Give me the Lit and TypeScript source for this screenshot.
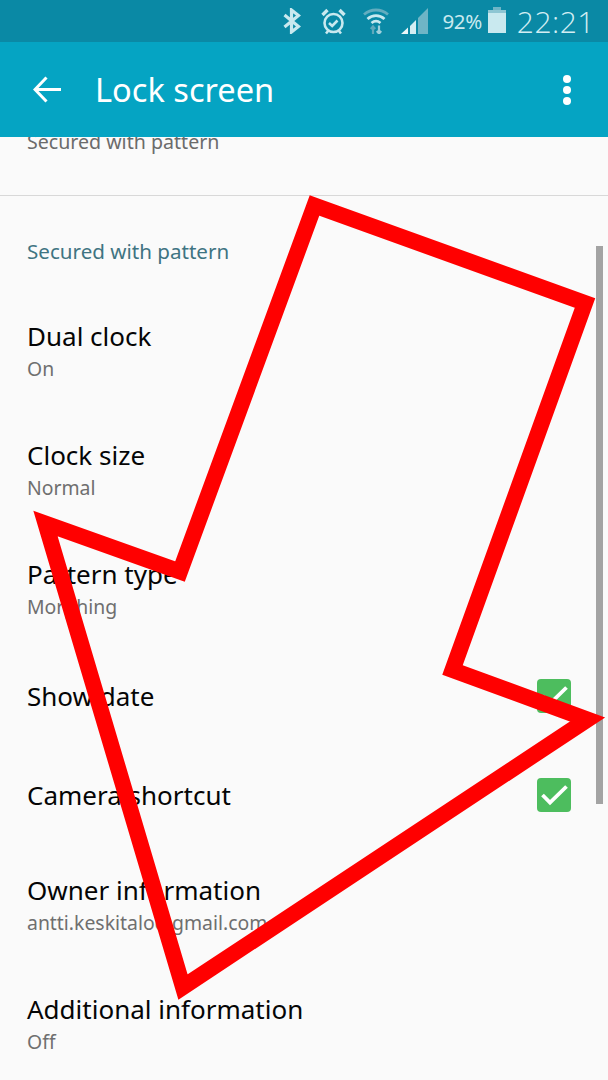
import { LitElement, html, css, svg } from "lit";
import { customElement } from "lit/decorators.js";

type Row = { title: string; sub?: string; check?: boolean; cls: string };

const rows: Row[] = [
  { title: "Dual clock", sub: "On", cls: "two" },
  { title: "Clock size", sub: "Normal", cls: "two" },
  { title: "Pattern type", sub: "Morphing", cls: "two" },
  { title: "Show date", check: true, cls: "one up" },
  { title: "Camera shortcut", check: true, cls: "one" },
  { title: "Owner information", sub: "antti.keskitalo@gmail.com", cls: "two down" },
  { title: "Additional information", sub: "Off", cls: "two" },
];

@customElement("app-root")
export class AppRoot extends LitElement {
  static styles = css`
    :host {
      display: block;
      position: relative;
      width: 608px;
      height: 1080px;
      overflow: hidden;
      background: #fafafa;
      font-family: "Noto Sans", "Open Sans", sans-serif;
    }
    .status {
      height: 42px;
      background: #0a89a5;
      display: flex;
      align-items: center;
      justify-content: flex-end;
      color: #c9e9ef;
    }
    .status svg { display: block; flex: none; }
    .bt { margin-right: 20px; margin-top: -1px; }
    .alarm { margin-right: 17px; margin-top: 1px; }
    .wifi { margin-right: 12px; margin-top: -1px; }
    .signal { margin-right: 15px; margin-top: -1px; }
    .pct { font-size: 20.5px; letter-spacing: -0.4px; margin-right: 6px; }
    .batt { margin-right: 11px; margin-top: -2px; }
    .time {
      font-size: 30px;
      letter-spacing: 0.5px;
      margin-right: 13px;
      font-weight: 300;
      font-family: "Open Sans", sans-serif;
      color: #d3eef3;
    }
    .bar {
      height: 95px;
      background: #05a4c3;
      display: flex;
      align-items: center;
      color: #fff;
      box-sizing: border-box;
      padding: 0 0 0 33px;
    }
    .bar h1 {
      margin: 0 0 0 33px;
      font-size: 32.6px;
      font-weight: 400;
      flex: 1;
    }
    .more { margin-right: 36px; }
    .clip {
      height: 59px;
      overflow: hidden;
      border-bottom: 1.5px solid #d8d8d8;
      box-sizing: border-box;
      padding-left: 27px;
    }
    .clip div {
      margin-top: -9px;
      font-size: 19.6px;
      line-height: 28px;
      color: #6b6b6b;
    }
    .section {
      margin: 41px 0 0 27px;
      font-size: 20.6px;
      line-height: 28px;
      color: #3f7482;
    }
    .rows { margin-top: 27px; }
    .row {
      display: flex;
      align-items: center;
      padding: 0 37px 0 27px;
      box-sizing: border-box;
    }
    .row.two { height: 119px; }
    .row.one { height: 99px; }
    .row.up { margin-top: -3px; }
    .row.down { margin-top: 2px; }
    .text { flex: 1; }
    .title { font-size: 26px; line-height: 32px; color: #050505; }
    .sub { font-size: 19.4px; line-height: 28px; color: #6f6f6f; margin-top: 3px; }
    .check {
      width: 34px;
      height: 34px;
      border-radius: 4px;
      background: #4dbd5e;
    }
    .check svg { display: block; }
    .scroll {
      position: absolute;
      left: 596px;
      top: 246px;
      width: 7px;
      height: 558px;
      background: #a3a3a3;
    }
    .arrow {
      position: absolute;
      left: 0;
      top: 0;
    }
  `;

  render() {
    return html`
      <div class="status">
        <svg class="bt" width="18" height="26" viewBox="0 0 18 26" fill="none" stroke="currentColor" stroke-width="3.2">
          <path d="M1.500 7 15.500 18.500 8.500 24V2L15.500 7.500 1.500 19" />
        </svg>
        <svg class="alarm" width="25" height="27" viewBox="0 0 25 27" fill="none" stroke="currentColor" stroke-width="2.6">
          <circle cx="12.500" cy="15" r="9" />
          <path d="M8 15l3.200 3 5.300-5.500M5 25.500l2.500-3M20 25.500l-2.500-3" />
          <path d="M1.500 7 6.500 2M23.500 7 18.500 2" stroke-width="3.400" />
        </svg>
        <svg class="wifi" width="26" height="27" viewBox="0 0 26 27" fill="none">
          <path d="M1 7.500C8 1.500 18 1.500 25 7.500" stroke="#62adbf" stroke-width="2.800" />
          <path d="M4.500 12c5-4.500 12-4.500 17 0" stroke="#c9e9ef" stroke-width="2.800" />
          <path d="M8.500 16c2.700-2.200 6.300-2.200 9 0" stroke="#c9e9ef" stroke-width="2.800" />
          <path d="M10 19.500v7.500M7.800 22l2.200-2.500 2.200 2.500" stroke="#5fa9bc" stroke-width="2.200" />
          <path d="M16 18.500v7.500M13.800 24l2.200 2.500 2.200-2.500" stroke="#9fd0dc" stroke-width="2.200" />
        </svg>
        <svg class="signal" width="27" height="26" viewBox="0 0 27 26">
          <path d="M0 26h7v-6.500z" fill="#eaf6f8" />
          <path d="M9 26h6V12l-6 6z" fill="#d3eef3" />
          <path d="M17 26h10V0L17 10z" fill="#6fb5c6" />
        </svg>
        <span class="pct">92%</span>
        <svg class="batt" width="18" height="26" viewBox="0 0 18 26">
          <path d="M5 0h8v3H5z" fill="#6fb5c6" />
          <path d="M0 3h18v4H0z" fill="#8ec6d3" />
          <path d="M0 6h18v20H0z" fill="#c9e9ef" />
        </svg>
        <span class="time">22:21</span>
      </div>
      <div class="bar">
        <svg width="29" height="27" viewBox="0 0 29 27" fill="none" stroke="#fff" stroke-width="3">
          <path d="M28 13.500H3M13.500 1.500 2 13.500l11.500 12" />
        </svg>
        <h1>Lock screen</h1>
        <svg class="more" width="10" height="32" viewBox="0 0 10 32" fill="#fff">
          <circle cx="5" cy="5" r="4" />
          <circle cx="5" cy="16" r="4" />
          <circle cx="5" cy="27" r="4" />
        </svg>
      </div>
      <div class="clip"><div>Secured with pattern</div></div>
      <div class="section">Secured with pattern</div>
      <div class="rows">
        ${rows.map(
          (r) => html`
            <div class="row ${r.cls}">
              <div class="text">
                <div class="title">${r.title}</div>
                ${r.sub ? html`<div class="sub">${r.sub}</div>` : ""}
              </div>
              ${r.check
                ? html`<div class="check">
                    <svg width="34" height="34" viewBox="0 0 34 34" fill="none" stroke="#fff" stroke-width="3.800">
                      <path d="M5.500 17l7.500 7.500L29.500 8.500" />
                    </svg>
                  </div>`
                : ""}
            </div>
          `
        )}
      </div>
      <div class="scroll"></div>
      <svg class="arrow" width="608" height="1080" viewBox="0 0 608 1080" fill="none">
        ${svg`<path d="M314.500 205.500 585 303 452.500 670 587.500 719.500 183 987 45.500 523.500 180 571.500Z" stroke="#ff0000" stroke-width="16" stroke-miterlimit="10" stroke-linejoin="miter" />`}
      </svg>
    `;
  }
}
